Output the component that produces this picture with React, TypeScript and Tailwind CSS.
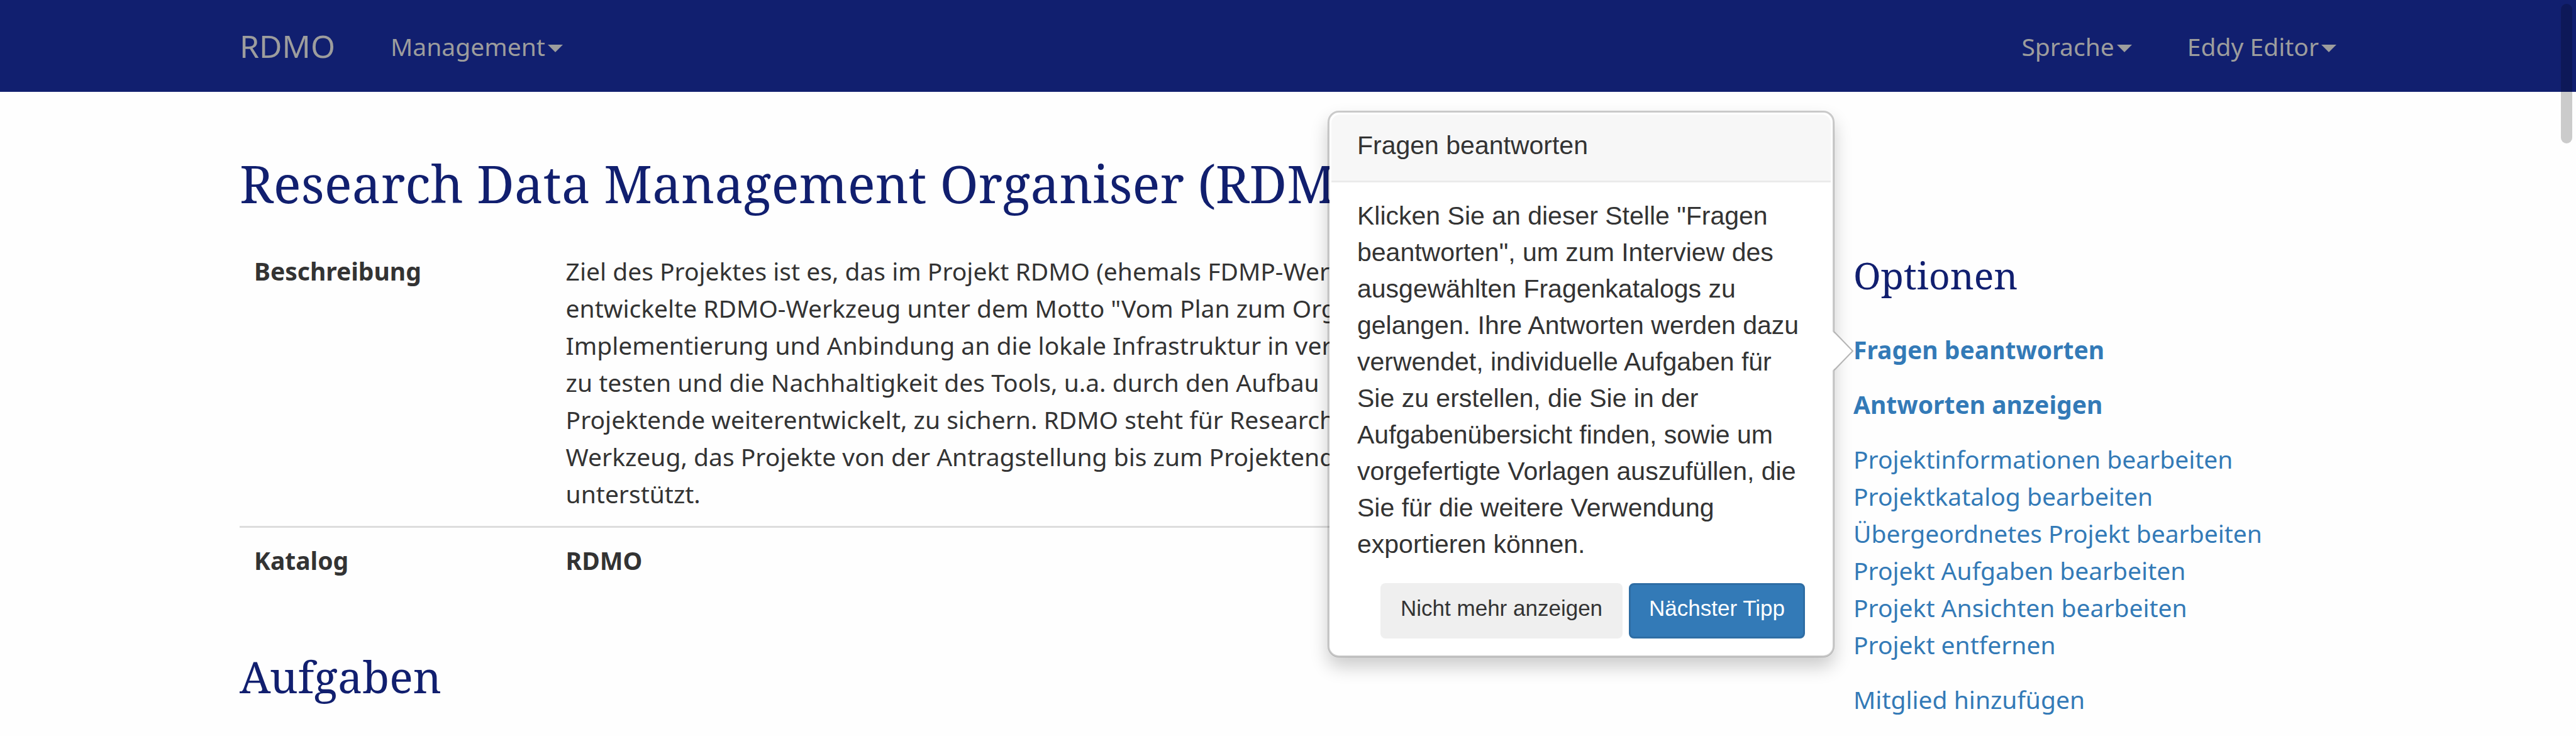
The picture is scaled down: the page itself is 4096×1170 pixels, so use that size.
import React from "react";

const sans = "font-['Droid_Sans','Noto_Sans',sans-serif]";
const serif = "font-['Droid_Serif','Noto_Serif','DejaVu_Serif',serif]";

function Caret() {
  return (
    <svg viewBox="0 0 24 12" className="mt-2 h-3 w-6" aria-hidden="true">
      <path d="M0 0H24L12 12Z" fill="currentColor" />
    </svg>
  );
}

function NavMenu({ label }: { label: string }) {
  return (
    <button type="button" className="flex items-center gap-1 leading-[59px]">
      {label}
      <Caret />
    </button>
  );
}

function Popover() {
  return (
    <div
      role="dialog"
      aria-labelledby="tip-title"
      className="absolute top-[-350px] right-full z-10 mr-[30px] w-[806px] rounded-[18px] border-[3px] border-black/20 bg-white bg-clip-padding p-[3px] font-['Liberation_Sans',sans-serif] text-[41px] leading-[58px] font-normal text-[#333] shadow-[0_15px_29px_rgba(0,0,0,0.2)]"
    >
      <h3
        id="tip-title"
        className="rounded-t-[14px] border-b-[3px] border-[#ebebeb] bg-[#f7f7f7] px-[41px] pt-5 pb-[27px]"
      >
        Fragen beantworten
      </h3>
      <div className="px-[41px] py-6">
        <p className="whitespace-nowrap">
          Klicken Sie an dieser Stelle "Fragen
          <br />
          beantworten", um zum Interview des
          <br />
          ausgewählten Fragenkatalogs zu
          <br />
          gelangen. Ihre Antworten werden dazu
          <br />
          verwendet, individuelle Aufgaben für
          <br />
          Sie zu erstellen, die Sie in der
          <br />
          Aufgabenübersicht finden, sowie um
          <br />
          vorgefertigte Vorlagen auszufüllen, die
          <br />
          Sie für die weitere Verwendung
          <br />
          exportieren können.
        </p>
        <div className="mt-[33px] flex justify-end gap-[10px] text-[35px] leading-[54px]">
          <button type="button" className="rounded-lg bg-[#efefef] px-8 pt-[13px] pb-[21px]">
            Nicht mehr anzeigen
          </button>
          <button
            type="button"
            className="rounded-lg border-[3px] border-[#2e6da4] bg-[#337ab7] px-[29px] pt-[10px] pb-[18px] text-white"
          >
            Nächster Tipp
          </button>
        </div>
      </div>
      <svg
        viewBox="0 0 34 64"
        className="absolute top-[347px] left-full h-16 w-[34px]"
        aria-hidden="true"
      >
        <path d="M0 1L31 32L0 63Z" fill="#fff" />
        <path d="M2 1L32 32L2 63" fill="none" stroke="#b5b5b5" strokeWidth="2" />
      </svg>
    </div>
  );
}

const projectLinks = [
  "Projektinformationen bearbeiten",
  "Projektkatalog bearbeiten",
  "Übergeordnetes Projekt bearbeiten",
  "Projekt Aufgaben bearbeiten",
  "Projekt Ansichten bearbeiten",
  "Projekt entfernen",
];

export default function App() {
  return (
    <div
      className={`relative min-h-screen overflow-hidden bg-[#fefefe] text-[39px] leading-[59px] text-[#333] ${sans}`}
    >
      <header className="bg-[#111f6f] text-[#9d9d9d]">
        <nav className="mx-auto flex h-[146px] max-w-[3422px] items-center px-11">
          <a href="#" className="text-[50px]">
            RDMO
          </a>
          <div className="ml-[88px]">
            <NavMenu label="Management" />
          </div>
          <div className="ml-auto flex gap-[88px]">
            <NavMenu label="Sprache" />
            <NavMenu label="Eddy Editor" />
          </div>
        </nav>
      </header>

      <div className="mx-auto max-w-[3422px] px-11 pt-[100px]">
        <h1 className={`text-[82px] leading-[90px] text-[#111f6f] ${serif}`}>
          Research Data Management Organiser (RDMO)
        </h1>
        <div className="mt-[43px] flex gap-[88px]">
          <main className="min-w-0 flex-1">
            <table className="w-full table-fixed border-collapse text-left">
              <tbody>
                <tr className="align-top">
                  <th className="w-1/5 px-[23px] py-[22px] font-bold">Beschreibung</th>
                  <td className="px-[23px] py-[22px] whitespace-nowrap">
                    Ziel des Projektes ist es, das im Projekt RDMO (ehemals FDMP-Werkzeug)
                    <br />
                    entwickelte RDMO-Werkzeug unter dem Motto "Vom Plan zum Organiser"
                    <br />
                    Implementierung und Anbindung an die lokale Infrastruktur in verschiedenen
                    <br />
                    zu testen und die Nachhaltigkeit des Tools, u.a. durch den Aufbau
                    <br />
                    Projektende weiterentwickelt, zu sichern. RDMO steht für Research
                    <br />
                    Werkzeug, das Projekte von der Antragstellung bis zum Projektende
                    <br />
                    unterstützt.
                  </td>
                </tr>
                <tr className="border-t-[3px] border-[#ddd] align-top">
                  <th className="px-[23px] py-[22px] font-bold">Katalog</th>
                  <td className="px-[23px] py-[22px] font-bold">RDMO</td>
                </tr>
              </tbody>
            </table>
            <h2 className={`mt-[95px] text-[70px] leading-[76px] text-[#111f6f] ${serif}`}>
              Aufgaben
            </h2>
          </main>

          <aside className="w-[768px] shrink-0 pt-[26px]">
            <h2 className={`text-[59px] leading-[64px] text-[#111f6f] ${serif}`}>Optionen</h2>
            <div className="mt-[57px] flex flex-col gap-7 text-[#337ab7]">
              <div className="relative font-bold">
                <a href="#">Fragen beantworten</a>
                <Popover />
              </div>
              <a href="#" className="font-bold">
                Antworten anzeigen
              </a>
              <ul>
                {projectLinks.map((label) => (
                  <li key={label}>
                    <a href="#">{label}</a>
                  </li>
                ))}
              </ul>
              <a href="#">Mitglied hinzufügen</a>
            </div>
          </aside>
        </div>
      </div>

      <div className="absolute top-1.5 right-1.5 z-20 h-[222px] w-[18px] rounded-full bg-black/20" />
    </div>
  );
}
